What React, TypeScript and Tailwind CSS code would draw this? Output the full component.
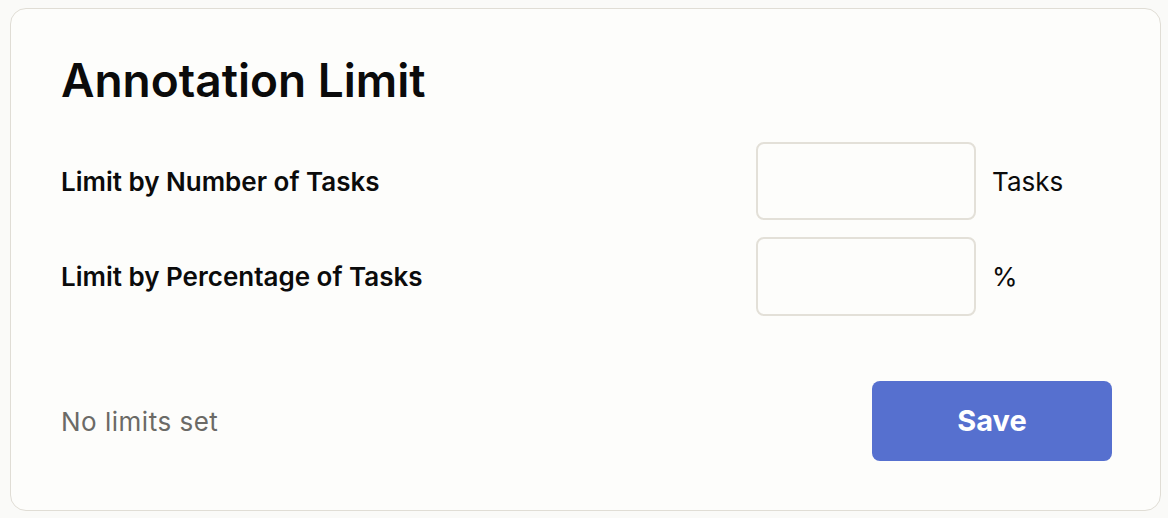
import React from "react";

export default function App() {
  return (
    <div className="min-h-[518px] w-[1168px] bg-[#fafaf8] pt-[8px] pl-[10px] font-['Inter',sans-serif] text-[#0b0b0b]">
      <div className="flex h-[503px] w-[1151px] flex-col rounded-[16px] border border-[#e0ddd5] bg-[#fdfdfb] pl-[50px] pr-[48px] pt-[42px]">
        <h1 className="text-[46px] font-semibold leading-[58px] tracking-[0px]">Annotation Limit</h1>
        <div className="mt-[33px] grid grid-cols-[1fr_220px_120px] items-center gap-x-[16px] gap-y-[17px]">
          <div className="text-[26px] font-semibold">Limit by Number of Tasks</div>
          <input className="h-[78px] w-[220px] rounded-[8px] border-2 border-[#e3e0d8] bg-[#fdfdfb] outline-none" />
          <div className="text-[26px]">Tasks</div>
          <div className="text-[26px] font-semibold">Limit by Percentage of Tasks</div>
          <input className="h-[79px] w-[220px] rounded-[8px] border-2 border-[#e3e0d8] bg-[#fdfdfb] outline-none" />
          <div className="text-[26px]">%</div>
        </div>
        <div className="mt-[65px] flex items-center justify-between">
          <div className="text-[26px] tracking-[0.5px] text-[#6b6a66]">No limits set</div>
          <button className="h-[80px] w-[240px] rounded-[8px] bg-[#5670cf] text-[29px] font-bold text-white">Save</button>
        </div>
      </div>
    </div>
  );
}
